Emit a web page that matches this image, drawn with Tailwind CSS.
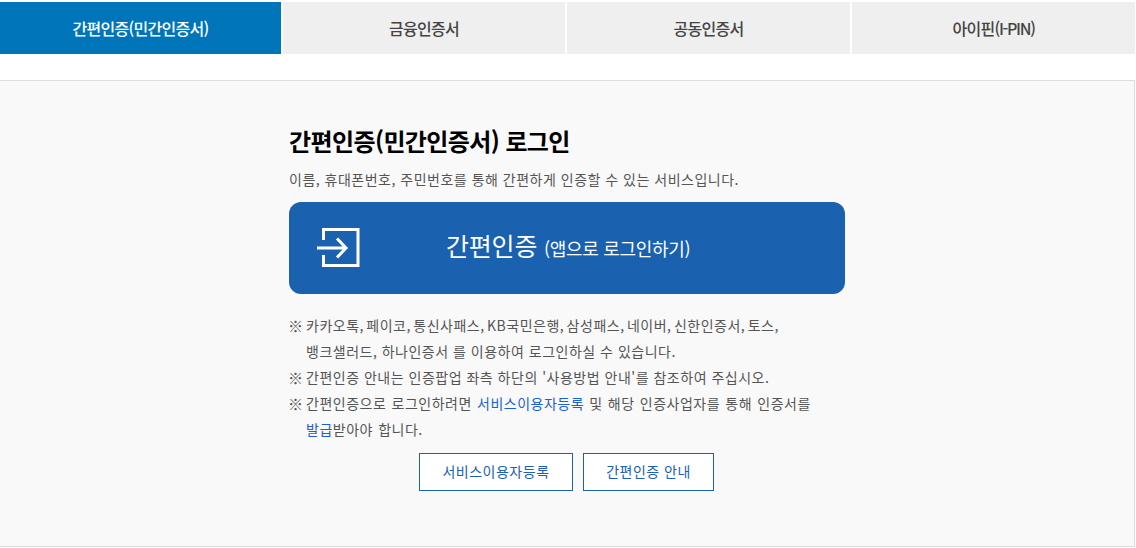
<!DOCTYPE html>
<html lang="ko">
<head>
    <meta charset="UTF-8">
    <title>간편인증 로그인</title>
    <script src="https://cdn.jsdelivr.net/npm/@tailwindcss/browser@4"></script>
</head>
<body class="bg-white font-['Noto_Sans_CJK_KR','Noto_Sans',sans-serif] text-[14px] text-[#555] overflow-hidden">
    <div class="w-[1135px] pt-[2px]">
        <ul class="flex gap-[2px] h-[52px] text-[16px] font-medium tracking-[-0.7px]">
            <li class="w-[281px] flex items-center justify-center bg-[#0075b9] text-white">간편인증(민간인증서)</li>
            <li class="w-[282px] flex items-center justify-center bg-[#efefef] text-[#444]">금융인증서</li>
            <li class="w-[283px] flex items-center justify-center bg-[#efefef] text-[#444]">공동인증서</li>
            <li class="w-[283px] flex items-center justify-center bg-[#efefef] text-[#444]">아이핀<span class="tracking-[-1.3px]">(I-PIN)</span></li>
        </ul>

        <div class="mt-[26px] h-[467px] border border-l-0 border-[#ddd] bg-[#f9f9f9] pl-[289px] pt-[43px]">
            <div class="w-[556px]">
                <h2 class="text-[24px] leading-[34px] font-bold text-black tracking-[-0.6px]">간편인증(민간인증서) 로그인</h2>
                <p class="mt-[11px] leading-[20px] tracking-[0.5px]">이름, 휴대폰번호, 주민번호를 통해 간편하게 인증할 수 있는 서비스입니다.</p>

                <a class="mt-[13px] h-[92px] flex items-center rounded-[12px] bg-[#1a61b0] text-white">
                    <svg class="ml-[28px] w-[44px] h-[42px]" viewBox="0 0 44 42" fill="none" stroke="white" stroke-width="3">
                        <path d="M6.5 13V2.5H41V38.5H6.5V28"/>
                        <path d="M0 21H28M20 11.5L29 21L20 30.5"/>
                    </svg>
                    <span class="ml-[85px] pb-[4px] text-[25px] tracking-[-0.2px]">간편인증 <span class="text-[18px] tracking-[-0.3px]">(앱으로 로그인하기)</span></span>
                </a>

                <ul class="mt-[19px] leading-[25.9px] tracking-[0.5px]">
                    <li class="flex"><span class="w-[17px] shrink-0 text-[15px] -ml-[1px] mr-[1px] tracking-normal">※</span>
                        <div>
                            <p class="[word-spacing:-2px]">카카오톡, 페이코, 통신사패스, KB국민은행, 삼성패스, 네이버, 신한인증서, 토스,</p>
                            <p>뱅크샐러드, 하나인증서 를 이용하여 로그인하실 수 있습니다.</p>
                        </div>
                    </li>
                    <li class="flex"><span class="w-[17px] shrink-0 text-[15px] -ml-[1px] mr-[1px] tracking-normal">※</span><p>간편인증 안내는 인증팝업 좌측 하단의 '사용방법 안내'를 참조하여 주십시오.</p></li>
                    <li class="flex"><span class="w-[17px] shrink-0 text-[15px] -ml-[1px] mr-[1px] tracking-normal">※</span>
                        <div class="[word-spacing:0.8px]">
                            <p>간편인증으로 로그인하려면 <a class="text-[#1a61d0]">서비스이용자등록</a> 및 해당 인증사업자를 통해 인증서를</p>
                            <p><a class="text-[#1a61d0]">발급</a>받아야 합니다.</p>
                        </div>
                    </li>
                </ul>

                <div class="mt-[10.25px] ml-[130px] flex gap-[10px] tracking-[0.5px]">
                    <a class="w-[154px] h-[38px] flex items-center justify-center border border-[#1a61b0] bg-white text-[#1a61b0]">서비스이용자등록</a>
                    <a class="w-[131px] h-[38px] flex items-center justify-center border border-[#1a61b0] bg-white text-[#1a61b0]">간편인증 안내</a>
                </div>
            </div>
        </div>
    </div>
</body>
</html>
